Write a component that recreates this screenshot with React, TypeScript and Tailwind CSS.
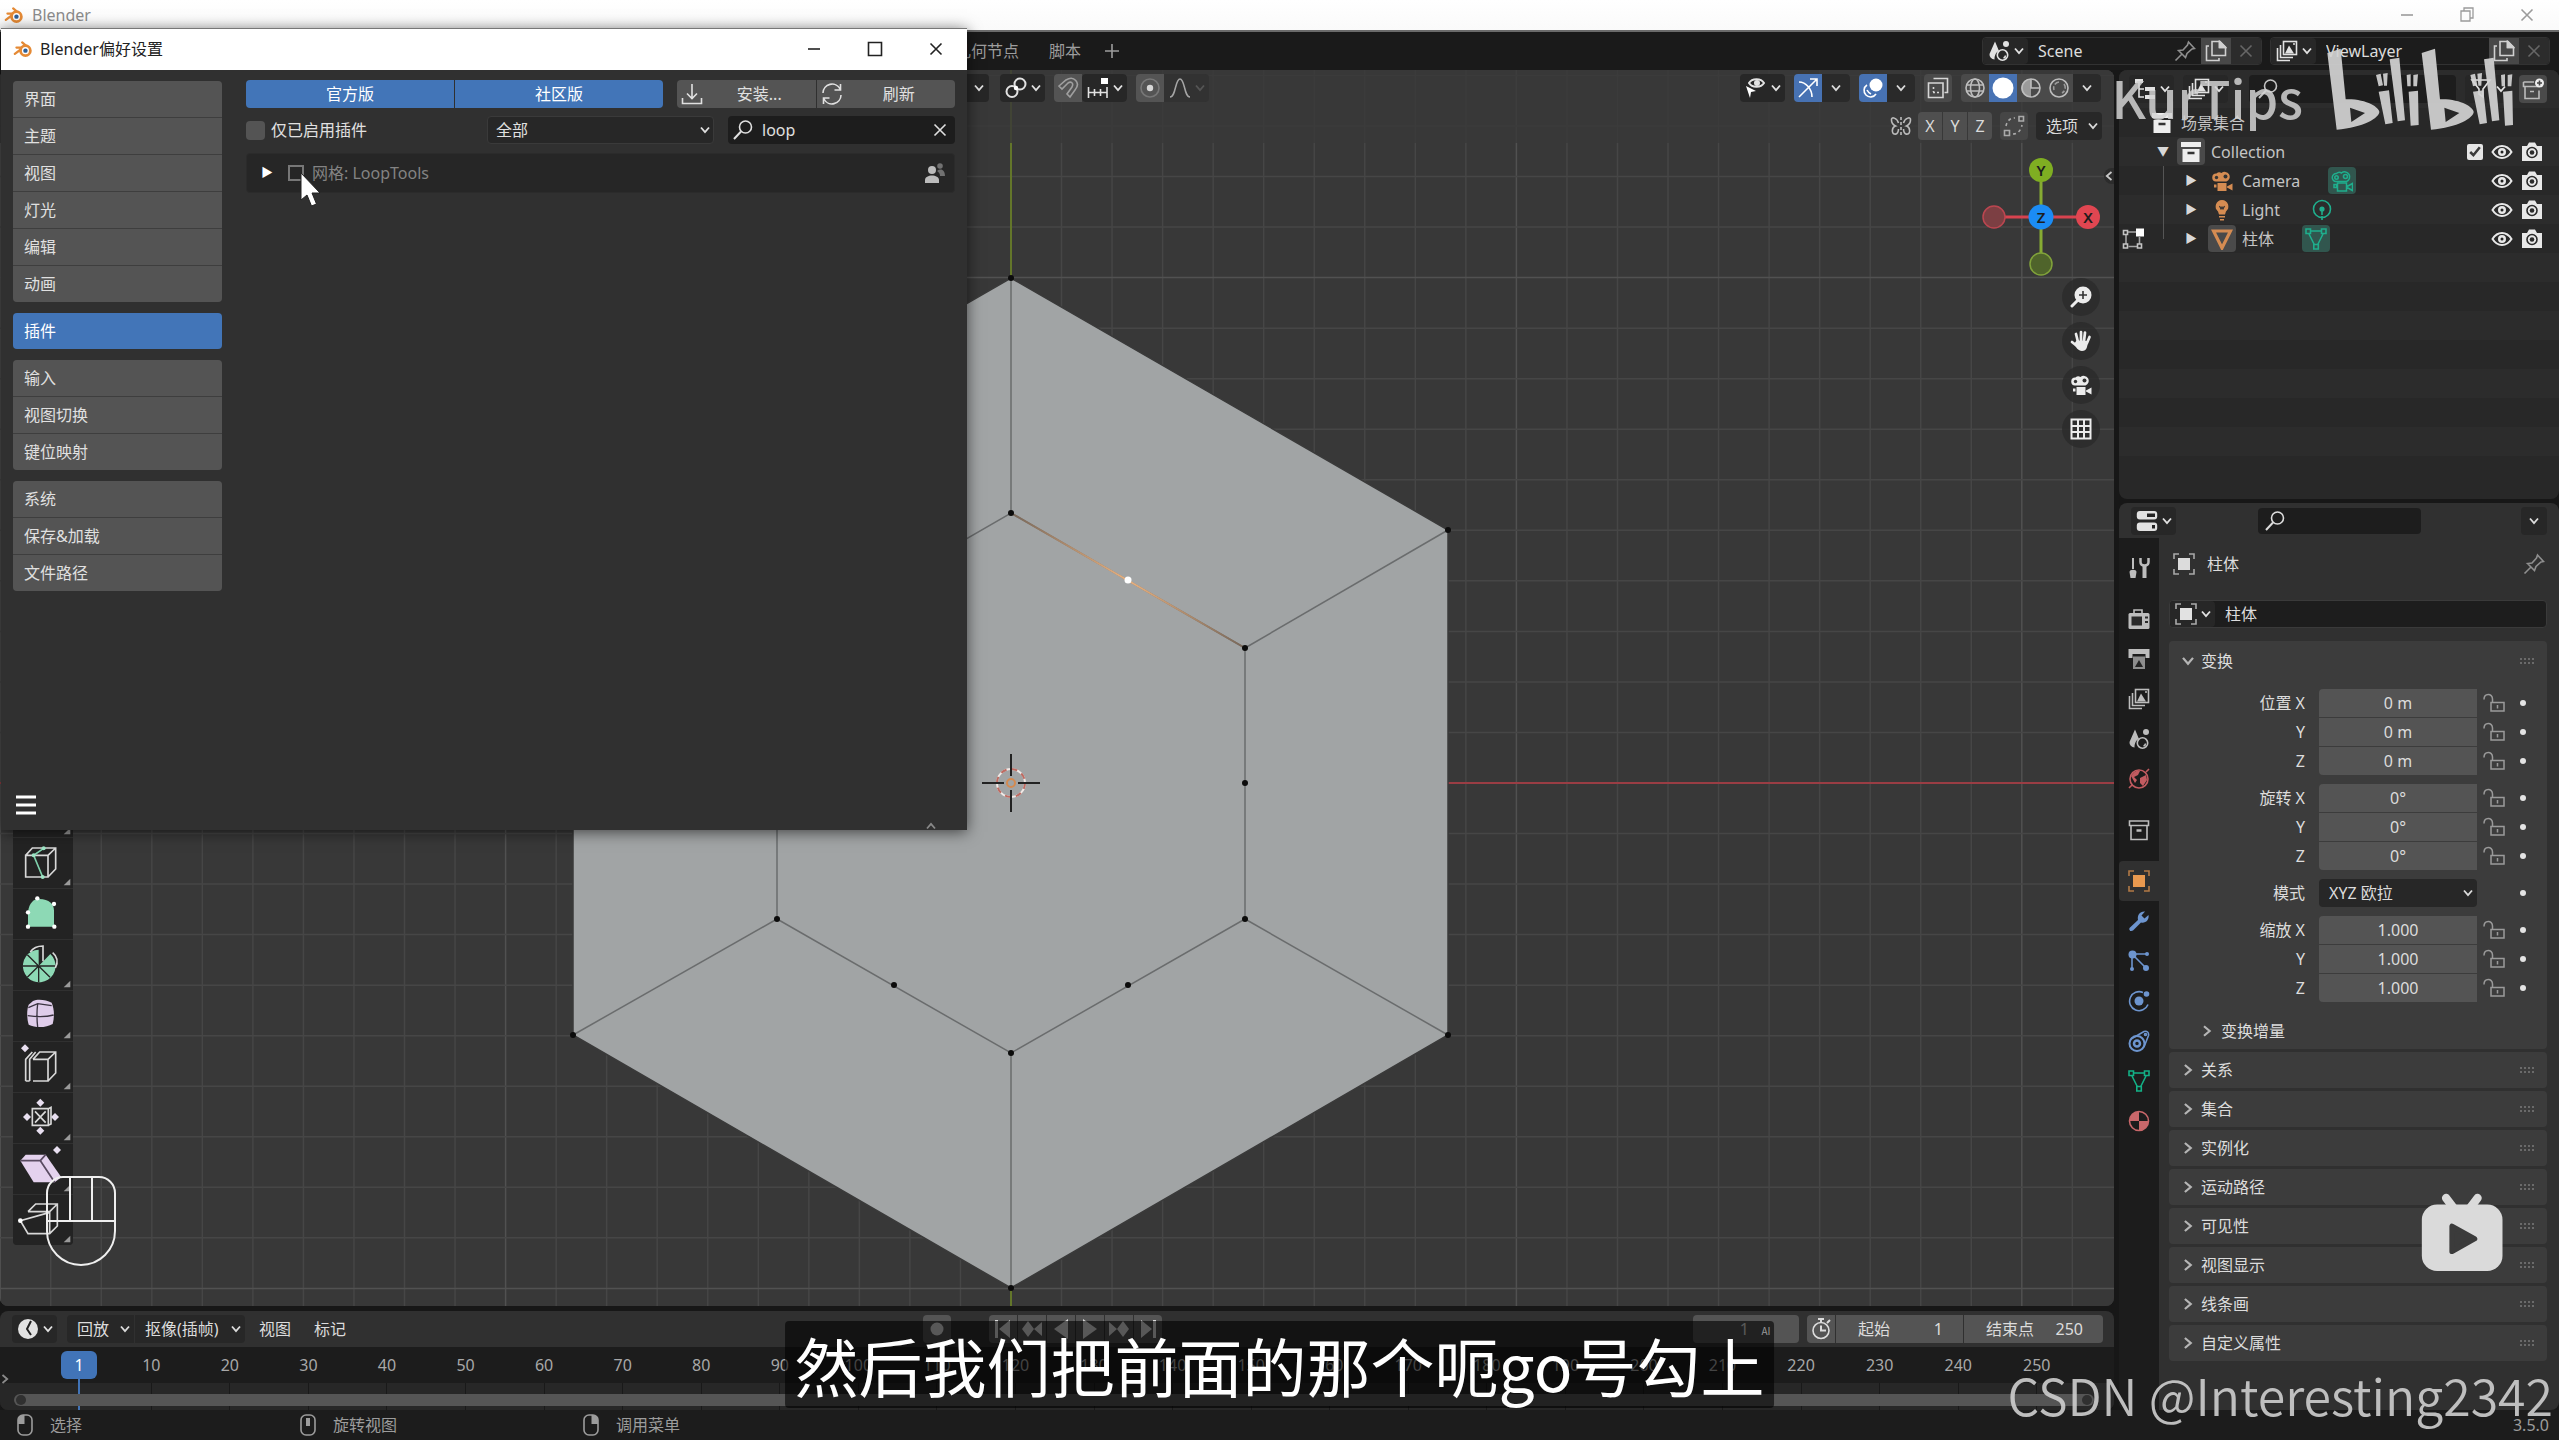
import type { ReactNode } from "react";
import { clsx } from "clsx";

const FONT = "font-['Noto_Sans','Noto_Sans_CJK_SC',sans-serif]";

/* ---------- icons ---------- */

type GlyphProps = { children: ReactNode; className?: string };

function Glyph({ children, className }: GlyphProps) {
  return (
    <svg
      viewBox="0 0 22 22"
      className={clsx("size-[22px] shrink-0", className)}
      fill="none"
      stroke="currentColor"
      strokeWidth="1.6"
      aria-hidden="true"
    >
      {children}
    </svg>
  );
}

function Chevron({ className }: { className?: string }) {
  return (
    <svg viewBox="0 0 10 8" className={clsx("h-2 w-2.5 shrink-0", className)} fill="none" stroke="currentColor" strokeWidth="1.8" aria-hidden="true">
      <path d="M1 1.5 5 6.2 9 1.5" />
    </svg>
  );
}

function BlenderLogo() {
  return (
    <svg viewBox="0 0 24 22" className="h-[18px] w-5 shrink-0" aria-hidden="true">
      <g fill="none" stroke="#e58a35" strokeLinecap="round" strokeWidth="2.8">
        <path d="M2 17 10 11M4 9.2h10M11 3l7 6" />
        <circle cx="15" cy="13" r="6" fill="#fff" strokeWidth="3.4" />
      </g>
      <circle cx="15" cy="13" r="2.7" fill="#2e5f97" />
    </svg>
  );
}

const SearchIcon = () => (
  <Glyph>
    <circle cx="13.5" cy="8" r="6" />
    <path d="M9 12.5 2 20" strokeWidth="2" />
  </Glyph>
);

const PinIcon = () => (
  <Glyph className="text-[#8f8f8f]">
    <path d="m1.5 20.5 6.5-6.5M4.5 10.5l7 7 1.500-4 5-4.500 2.500-.5-6-6.500-1 3-4.500 5z" />
  </Glyph>
);

const SceneIcon = () => (
  <Glyph>
    <path d="M7 1.500 1.500 14a5 5 0 0 0 5 5.500c0-5 2-7.500 4.500-8.500z" fill="currentColor" stroke="none" />
    <circle cx="14.500" cy="15" r="5.200" />
    <circle cx="18" cy="4" r="3" fill="currentColor" stroke="none" />
    <path d="M15.500 18c1.500-.5 2-1.500 2-2.500" />
  </Glyph>
);

const LayersIcon = () => (
  <Glyph>
    <rect x="7.500" y="1.500" width="13" height="13" />
    <path d="M9 13.500 13 5.500l5 8z" fill="currentColor" stroke="none" />
    <path d="M4.500 5v12.500H17M1.500 8v12.500H14" />
    <circle cx="18" cy="4" r="1" fill="currentColor" stroke="none" />
  </Glyph>
);

const CopyIcon = () => (
  <Glyph>
    <path d="M7 1.500h8l5.500 5.500v8.500H7zM14.500 1.500v6h6M4 6H1.500v14.500H14V18" />
    <path d="M14.500 1.500v6h6z" fill="currentColor" />
  </Glyph>
);

const CrossIcon = ({ className }: { className?: string }) => (
  <Glyph className={className}>
    <path d="m5.500 5.500 11 11m0-11-11 11" />
  </Glyph>
);

const ObjectIcon = () => (
  <Glyph>
    <path d="M1 6V1h5M16 1h5v5M21 16v5h-5M6 21H1v-5" strokeOpacity=".7" />
    <rect x="5" y="5" width="12" height="12" fill="currentColor" stroke="none" />
  </Glyph>
);

const BoxIcon = ({ filled = false }: { filled?: boolean }) => (
  <Glyph>
    {filled ? (
      <>
        <path d="M1 1h20v5H1zM2.500 8h17v13h-17z" fill="currentColor" stroke="none" />
        <path d="M7.500 12h7" stroke="#333" strokeWidth="2.500" />
      </>
    ) : (
      <>
        <path d="M1.500 2h19v4.500h-19zM3 6.500h16v14H3z" />
        <path d="M8.500 11.500h5" strokeWidth="2.500" />
      </>
    )}
  </Glyph>
);

const MovieIcon = ({ outline = false }: { outline?: boolean }) => (
  <Glyph>
    <g fill={outline ? "none" : "currentColor"} stroke={outline ? "currentColor" : "none"} strokeWidth="1.500">
      <path d="M5.500 3.500a4 4 0 0 1 5-.5 5 5 0 1 1 5 8.500H5a4 4 0 0 1 .5-8z" />
      <path d="M6.500 13h9v8h-9zM16 16.500l5.500-3v7l-5.500-3zM3 14.500h2.500v3H3z" />
    </g>
    <g fill={outline ? "none" : "#333"} stroke={outline ? "currentColor" : "none"}>
      <circle cx="5.500" cy="7.500" r="1.700" />
      <circle cx="14.500" cy="6.500" r="2" />
    </g>
  </Glyph>
);

const MeshIcon = () => (
  <Glyph>
    <path d="M5.500 3h11M4 6l5.500 11M18 6l-5.500 11" />
    <path d="M1 1h4.500v4.500H1zM16.500 1H21v4.500h-4.500zM8.800 16.500h4.500V21H8.800z" />
  </Glyph>
);

const EyeIcon = () => (
  <Glyph>
    <path d="M1.500 11c5-8 14-8 19 0-5 8-14 8-19 0z" strokeWidth="2" />
    <circle cx="11" cy="11" r="4" fill="currentColor" stroke="none" />
    <circle cx="11" cy="11" r="1.500" fill="#222" stroke="none" />
  </Glyph>
);

const CameraIcon = () => (
  <Glyph>
    <path d="M1 5h5l2-3.500h6L16 5h5v15H1z" fill="currentColor" stroke="none" />
    <circle cx="11" cy="11.500" r="5" stroke="#2a2a2a" />
    <circle cx="11" cy="11.500" r="2.300" fill="#2a2a2a" stroke="none" />
  </Glyph>
);

const EditModeIcon = () => (
  <Glyph>
    <path d="M6 4h8M4 6.500V16M17.500 9v7M6.500 18.500H15" strokeOpacity=".8" />
    <path d="M1.500 2.500h4v4h-4zM1.500 16h4v4h-4zM15.500 16h4v4h-4z" />
    <rect x="14" y="0.500" width="8" height="8" fill="#fff" stroke="none" />
  </Glyph>
);

const LockIcon = () => (
  <Glyph className="text-[#9a9a9a]">
    <path d="M8 10.500h13v8.500H8zM14.500 13v3.500M1 7.500C1 1 9.500 1 9.500 7v3" strokeWidth="1.500" />
  </Glyph>
);

const GripIcon = () => (
  <svg viewBox="0 0 15 7" className="h-[7px] w-[15px] text-[#6a6a6a]" fill="currentColor" aria-hidden="true">
    {[0, 4, 8, 12].map((x) => (
      <g key={x}>
        <rect x={x} y="0" width="2" height="2" />
        <rect x={x} y="4" width="2" height="2" />
      </g>
    ))}
  </svg>
);

/* ---------- shared controls ---------- */

type IconButtonProps = {
  label: string;
  children: ReactNode;
  className?: string;
};

function IconButton({ label, children, className }: IconButtonProps) {
  return (
    <button type="button" aria-label={label} className={clsx("flex h-7 shrink-0 items-center justify-center", className)}>
      {children}
    </button>
  );
}

function MenuIconButton({ label, children, className }: IconButtonProps) {
  return (
    <IconButton label={label} className={clsx("w-[45px] gap-1 rounded-sm bg-[#272727] text-[#e2e2e2]", className)}>
      {children}
      <Chevron />
    </IconButton>
  );
}

/* ---------- title and top bar ---------- */

function TitleBar() {
  return (
    <header className="flex h-8 shrink-0 items-center gap-2 border-b-2 border-[#6b6b6b] bg-gradient-to-b from-white to-[#fafafa] pl-1 text-[#8b8b8b]">
      <BlenderLogo />
      <h1 className="text-base leading-5">Blender</h1>
      <div className="ml-auto flex gap-[38px] pr-[21px] text-[#9b9b9b]">
        <button type="button" aria-label="最小化">
          <Glyph>
            <path d="M5 11h12" />
          </Glyph>
        </button>
        <button type="button" aria-label="还原">
          <Glyph>
            <path d="M5 7h9v10H5zM8 7V4h9v10h-3" strokeWidth="1.300" />
          </Glyph>
        </button>
        <button type="button" aria-label="关闭">
          <CrossIcon />
        </button>
      </div>
    </header>
  );
}

type DataBlockProps = { label: string; name: string; icon: ReactNode; pin?: boolean };

function DataBlock({ label, name, icon, pin }: DataBlockProps) {
  return (
    <div className="flex h-7 w-[280px] overflow-hidden rounded border border-[#323232] bg-[#1c1c1c]">
      <MenuIconButton label={`浏览${label}`} className="h-full rounded-none">
        {icon}
      </MenuIconButton>
      <input aria-label={label} defaultValue={name} className="min-w-0 flex-1 bg-transparent px-2.5 text-base text-[#dcdcdc]" />
      {pin && (
        <IconButton label="固定" className="h-full w-8">
          <PinIcon />
        </IconButton>
      )}
      <IconButton label={`新建${label}`} className="h-full w-[30px] bg-[#484848] text-[#d0d0d0]">
        <CopyIcon />
      </IconButton>
      <IconButton label={`移除${label}`} className="h-full w-[30px] bg-[#2c2c2c] text-[#666]">
        <CrossIcon />
      </IconButton>
    </div>
  );
}

function TopBar() {
  return (
    <div className="flex h-[38px] shrink-0 items-center bg-[#1a1a1a] pr-[9px] pl-[955px] text-base text-[#9d9d9d]">
      <nav className="flex items-center gap-[30px]">
        <button type="button">几何节点</button>
        <button type="button">脚本</button>
        <button type="button" aria-label="添加工作区" className="-ml-2.5">
          <Glyph>
            <path d="M11 4v14M4 11h14" />
          </Glyph>
        </button>
      </nav>
      <div className="ml-auto flex gap-2">
        <DataBlock label="场景" name="Scene" icon={<SceneIcon />} pin />
        <DataBlock label="视图层" name="ViewLayer" icon={<LayersIcon />} />
      </div>
    </div>
  );
}

/* ---------- 3D viewport ---------- */

const GRID = 50.54;
const OX = 1011;
const OY = 783;

const OUTER = [[1011, 278], [1448, 530], [1448, 1035], [1011, 1288], [573, 1035], [573, 530]];
const INNER = [[1011, 513], [1245, 648], [1245, 919], [1011, 1053], [777, 919], [777, 648]];
const MIDDLE = [[1245, 783], [1128, 985], [894, 985], [777, 783]];

function ViewportCanvas() {
  const columns = Array.from({ length: 43 }, (_, i) => i - 20);
  const rows = Array.from({ length: 25 }, (_, i) => i - 14);
  const lineColor = (i: number) => (i % 10 === 0 ? "#515151" : "#464646");

  return (
    <svg viewBox="0 70 2114 1236" preserveAspectRatio="xMidYMid slice" className="absolute inset-0 size-full" aria-hidden="true">
      <rect y="70" width="2114" height="1236" fill="#383838" />
      {columns.map((i) => (
        <line key={i} x1={OX + i * GRID} x2={OX + i * GRID} y1="70" y2="1306" stroke={lineColor(i)} strokeWidth="1.500" />
      ))}
      {rows.map((i) => (
        <line key={i} x1="0" x2="2114" y1={OY + i * GRID} y2={OY + i * GRID} stroke={lineColor(i)} strokeWidth="1.500" />
      ))}
      <line x1={OX} x2={OX} y1="70" y2="1306" stroke="#63762a" strokeWidth="2" />
      <line x1="0" x2="2114" y1={OY} y2={OY} stroke="#9a3d44" strokeWidth="2" />

      {/* mesh */}
      <polygon points={OUTER.join(" ")} fill="#a1a4a5" stroke="#3a3a3a" strokeWidth="1.500" />
      <polygon points={INNER.join(" ")} fill="none" stroke="#6a6c6d" strokeWidth="1.500" />
      {INNER.map(([x, y], i) => (
        <line key={i} x1={x} y1={y} x2={OUTER[i][0]} y2={OUTER[i][1]} stroke="#6a6c6d" strokeWidth="1.500" />
      ))}
      <defs>
        <linearGradient id="edge" x1="1011" y1="513" x2="1245" y2="648" gradientUnits="userSpaceOnUse">
          <stop offset="0" stopColor="#77675a" />
          <stop offset=".5" stopColor="#e8b180" />
          <stop offset="1" stopColor="#77675a" />
        </linearGradient>
      </defs>
      <line x1="1011" y1="513" x2="1245" y2="648" stroke="url(#edge)" strokeWidth="2" />
      {[...OUTER, ...INNER, ...MIDDLE].map(([x, y]) => (
        <circle key={`${x}-${y}`} cx={x} cy={y} r="3" fill="#0c0c0c" />
      ))}
      <circle cx="1128" cy="580" r="3.500" fill="#fff" />

      {/* 3D cursor */}
      <g fill="none" strokeWidth="2">
        <circle cx={OX} cy={OY} r="14" stroke="#f1e9e6" />
        <circle cx={OX} cy={OY} r="14" stroke="#bd6b62" strokeDasharray="6 5" />
        <path d="M1011 754v22M1011 790v22M982 783h22M1018 783h22" stroke="#222" />
        <circle cx={OX} cy={OY} r="4" stroke="#d48a50" />
      </g>
    </svg>
  );
}

function ViewportHeader() {
  const chevronBox = "w-7 rounded-r-sm bg-[#2a2a2a] text-[#dcdcdc]";
  const lit = "w-7 bg-[#545454]";
  const blue = "w-7 bg-[#4772b3] text-white";

  return (
    <div className="absolute inset-x-0 top-0 h-[73px] bg-[#383838]/80 pt-1 pr-[13px] pl-[944px]">
      <div className="flex items-center gap-[9px] text-[#d6d6d6]">
        <MenuIconButton label="坐标系">
          <span className="w-5" />
        </MenuIconButton>
        <MenuIconButton label="轴心点" className="ml-0.5">
          <Glyph>
            <circle cx="7" cy="14.500" r="5.500" strokeWidth="2" />
            <circle cx="15" cy="7" r="5.500" strokeWidth="2" />
            <circle cx="11" cy="11" r="2.200" fill="#fff" stroke="none" />
          </Glyph>
        </MenuIconButton>
        <div className="flex overflow-hidden rounded-sm">
          <IconButton label="吸附" className={lit}>
            <Glyph className="text-[#9f9f9f]">
              <path d="M2 9 9 3c8-5 15 3 9 10l-5 7-3-3 5-7c2-4-1-6-4-4L5 12z" />
            </Glyph>
          </IconButton>
          <MenuIconButton label="吸附至" className="rounded-none">
            <Glyph>
              <path d="M1.500 10v11M20 10v11M1 15.500h19M7.500 12v7M13.500 12v7" />
              <rect x="14" y="1" width="7" height="6" fill="#fff" stroke="none" />
            </Glyph>
          </MenuIconButton>
        </div>
        <div className="flex overflow-hidden rounded-sm">
          <IconButton label="衰减编辑" className={lit}>
            <Glyph>
              <circle cx="11" cy="11" r="9" stroke="#777" />
              <circle cx="11" cy="11" r="3.200" fill="currentColor" stroke="none" />
            </Glyph>
          </IconButton>
          <IconButton label="衰减类型" className="w-[45px] gap-1 bg-[#323232]">
            <Glyph className="text-[#a5a5a5]">
              <path d="M1 20c6 0 5-18 10-18s4 18 10 18" />
            </Glyph>
            <Chevron className="text-[#555]" />
          </IconButton>
        </div>

        <MenuIconButton label="物体可见性" className="ml-auto">
          <Glyph>
            <path d="M4 6c3-5 12-5 15 0-3 5-12 5-15 0z" strokeWidth="2" />
            <circle cx="12" cy="6" r="2.200" fill="currentColor" />
            <path d="m1 9 10 5-5 1-1 6z" fill="#fff" stroke="none" />
          </Glyph>
        </MenuIconButton>
        <div className="flex overflow-hidden rounded-sm">
          <IconButton label="显示 Gizmo" className={blue}>
            <Glyph>
              <path d="M2 20 20 2M13 2h7v7M2 5c7 0 13 7 13 15" />
            </Glyph>
          </IconButton>
          <IconButton label="Gizmo 选项" className={chevronBox}>
            <Chevron />
          </IconButton>
        </div>
        <div className="flex overflow-hidden rounded-sm">
          <IconButton label="显示叠加层" className={blue}>
            <Glyph>
              <circle cx="14" cy="8" r="6.500" fill="currentColor" stroke="none" />
              <path d="M5 8a6.500 6.500 0 1 0 9 9M5 13c1 2 2 3 4 4" />
            </Glyph>
          </IconButton>
          <IconButton label="叠加层选项" className={chevronBox}>
            <Chevron />
          </IconButton>
        </div>
        <IconButton label="透视模式" className="w-7 rounded-sm bg-[#4a4a4a]">
          <Glyph>
            <path d="M6.500 1.500h14v14h-3M4 6H1.500v14.500H16V6H6.500z" />
            <path d="M6 15.500h6M6.500 10v5" strokeDasharray="2 2" />
          </Glyph>
        </IconButton>
        <div className="flex overflow-hidden rounded-sm bg-[#4a4a4a] text-[#bdbdbd]">
          <IconButton label="线框" className="w-7">
            <Glyph>
              <circle cx="11" cy="11" r="9" />
              <ellipse cx="11" cy="11" rx="4.500" ry="9" />
              <path d="M2 8h18M2 14h18" />
            </Glyph>
          </IconButton>
          <IconButton label="实体" className={blue}>
            <Glyph>
              <circle cx="11" cy="11" r="10.500" fill="currentColor" stroke="none" />
            </Glyph>
          </IconButton>
          <IconButton label="材质预览" className="w-7">
            <Glyph>
              <circle cx="11" cy="11" r="9" />
              <path d="M11 11 4 17.500A9 9 0 0 1 11 2zM11 11 4 17.500a9 9 0 0 0 7 2.500z" fill="currentColor" fillOpacity=".7" stroke="none" />
              <path d="M11 2v9h9" />
            </Glyph>
          </IconButton>
          <IconButton label="渲染" className="w-7">
            <Glyph>
              <circle cx="11" cy="11" r="9" />
              <path d="M11 5a6 6 0 0 0-5 8M16 7a6 6 0 0 1-2 9" strokeOpacity=".7" strokeDasharray="5 2" />
            </Glyph>
          </IconButton>
          <IconButton label="着色选项" className="w-7 bg-[#2a2a2a] text-[#dcdcdc]">
            <Chevron />
          </IconButton>
        </div>
      </div>
    </div>
  );
}

function MeshOptions() {
  return (
    <div className="absolute top-[42px] right-3 flex items-center gap-2 text-base text-[#dadada]">
      <Glyph className="text-[#bbb]">
        <path d="M8.500 8C7 3 1 1 1.500 5c0 4 2 5 4 6-4 1-4 8-1 8 3 1 4-3 4-5M13.500 8C15 3 21 1 20.500 5c0 4-2 5-4 6 4 1 4 8 1 8-3 1-4-3-4-5" />
        <path d="M11 2v18" strokeDasharray="3 2" />
      </Glyph>
      <div className="-ml-0.5 flex gap-px overflow-hidden rounded-sm">
        {["X", "Y", "Z"].map((axis) => (
          <button key={axis} type="button" className="h-7 w-6 bg-[#4f4f4f]">
            {axis}
          </button>
        ))}
      </div>
      <IconButton label="自动合并" className="w-7 rounded-sm bg-[#464646] text-[#aaa]">
        <Glyph>
          <path d="M1.500 15.500h5v5h-5zM16 1.500h4.500V6H16z" />
          <path d="M3 11c1-5 4-8 9-8M10 19c5 0 8-4 9-9" strokeDasharray="3 3" />
        </Glyph>
      </IconButton>
      <button type="button" className="flex h-7 w-[66px] items-center justify-between rounded-sm bg-[#282828] pr-1 pl-2.5">
        选项
        <Chevron />
      </button>
    </div>
  );
}

function NavigationGizmo() {
  const navButton = "flex size-[38px] items-center justify-center rounded-full bg-[#2a2a2a]/80 text-[#ececec]";

  return (
    <>
      <svg viewBox="0 0 120 120" className="absolute top-[87px] right-[13px] size-[120px]" aria-hidden="true">
        <path d="M60 13v94" stroke="#86ab33" strokeWidth="3" />
        <path d="M13 60h94" stroke="#d8434f" strokeWidth="3" />
        <circle cx="13" cy="60" r="11" fill="#7c3f43" stroke="#bb4650" strokeWidth="1.500" />
        <circle cx="60" cy="107" r="11" fill="#4f642b" stroke="#80a23a" strokeWidth="1.500" />
        <circle cx="60" cy="13" r="12" fill="#7fae22" />
        <circle cx="107" cy="60" r="12" fill="#e04651" />
        <circle cx="60" cy="60" r="12.500" fill="#1b8cf5" />
        <g className="font-['Noto_Sans',sans-serif]" fontSize="15" fontWeight="600" textAnchor="middle" fill="#1d1d1d">
          <text x="60" y="18.500">Y</text>
          <text x="107" y="65.500">X</text>
          <text x="60" y="65.500">Z</text>
        </g>
      </svg>
      <div className="absolute top-[208px] right-3.5 flex flex-col gap-1.5">
        <button type="button" aria-label="缩放" className={navButton}>
          <Glyph className="size-6">
            <path d="m8 14-6 6" strokeWidth="3" strokeLinecap="round" />
            <circle cx="13" cy="9" r="8.500" fill="currentColor" stroke="none" />
            <path d="M13 5v8M9 9h8" stroke="#333" />
          </Glyph>
        </button>
        <button type="button" aria-label="平移" className={navButton}>
          <Glyph className="size-6">
            <path d="M8 12 6 4M11 11V2M14 11l1-8.500M17 13l2.500-6M7 16l-5-4" strokeWidth="2.700" strokeLinecap="round" />
            <path d="M6.500 10.500 18 11c-.5 5-1 10-6 10-4 0-6-4-8-7z" fill="currentColor" stroke="none" />
          </Glyph>
        </button>
        <button type="button" aria-label="相机视角" className={navButton}>
          <MovieIcon />
        </button>
        <button type="button" aria-label="切换正交" className={navButton}>
          <Glyph className="size-6">
            <path d="M1.500 1.500h19v19h-19zM8 1.500v19M14 1.500v19M1.500 8h19M1.500 14h19" strokeWidth="2" />
          </Glyph>
        </button>
      </div>
      <button type="button" aria-label="展开侧栏" className="absolute top-[98px] right-0 rounded-l-lg bg-[#2c2c2c] py-1">
        <Chevron className="rotate-90 text-[#c8c8c8]" />
      </button>
    </>
  );
}

const CUBE = "M38 52h67v65H38zM38 52l20-22h70v63l-23 24M105 52l23-22";
const Diamond = ({ x, y }: { x: number; y: number }) => (
  <path d={`M${x} ${y - 12} l12 12 -12 12 -12 -12z`} fill="#e8dff0" stroke="none" />
);

const TOOLS: { name: string; more: boolean; art: ReactNode }[] = [
  {
    name: "环切",
    more: true,
    art: <path d={CUBE} />,
  },
  {
    name: "切割",
    more: true,
    art: (
      <>
        <path d={CUBE} />
        <path d="M92 31 62 52l27 65" stroke="#7fd1ac" />
        <g fill="#9ce4c4" stroke="none">
          <circle cx="92" cy="31" r="6" />
          <circle cx="62" cy="52" r="6" />
          <circle cx="89" cy="117" r="6" />
        </g>
      </>
    ),
  },
  {
    name: "多边形建形",
    more: false,
    art: (
      <>
        <path d="M73 30c34-2 50 14 50 35v48H45V75c0-25 12-42 28-45z" fill="#8dd9b5" stroke="none" />
        <g fill="#fff" stroke="none">
          <circle cx="73" cy="28" r="6.500" />
          <circle cx="123" cy="45" r="6.500" />
          <circle cx="124" cy="113" r="6.500" />
          <circle cx="45" cy="113" r="6.500" />
          <circle cx="45" cy="70" r="6.500" />
        </g>
      </>
    ),
  },
  {
    name: "旋绕",
    more: true,
    art: (
      <>
        <path d="M77 78 112 42a49 49 0 1 1-35-13z" fill="#8dd9b5" stroke="none" />
        <path d="M77 78v48M77 78H29M77 78h49M77 78l34 34M77 78l-34 34M77 78 43 44" stroke="#242424" strokeWidth="4" />
        <path d="M52 36c8-12 22-18 38-18v46M119 38c12 10 18 26 8 46" />
      </>
    ),
  },
  {
    name: "光滑",
    more: true,
    art: (
      <>
        <path d="M60 30c15-7 40-3 56 5 8 20 9 40 3 64-20 12-52 12-72 2-6-20-6-45 0-60z" fill="#dfcdea" stroke="none" />
        <path d="M44 74c30 4 55 4 78-2M74 38c-3 25-3 45 0 70M46 50l28-12 42 6" stroke="#3a3340" strokeWidth="4" />
      </>
    ),
  },
  {
    name: "滑移边线",
    more: true,
    art: (
      <>
        <path d="M60 52h45v65H60M60 52l20-22h48v63l-23 24M105 52l23-22M38 117V52l20-22M50 117V52l18-22M38 117h12" />
        <Diamond x={36} y={19} />
      </>
    ),
  },
  {
    name: "法向缩放",
    more: true,
    art: (
      <>
        <path d="M58 47h48v50H58zM106 47l8-4v50l-8 4M66 55l32 34M98 55 66 89" />
        <Diamond x={82} y={29} />
        <Diamond x={82} y={113} />
        <Diamond x={42} y={72} />
        <Diamond x={126} y={72} />
      </>
    ),
  },
  {
    name: "切变",
    more: true,
    art: (
      <>
        <path d="M22 50 38 32h60l47 68-20 15H62z" fill="#e4d2ee" stroke="none" />
        <path d="M22 50h60l43 65M82 50l16-18" stroke="#5a4c62" />
        <Diamond x={132} y={18} />
      </>
    ),
  },
  {
    name: "断离区域",
    more: true,
    art: (
      <>
        <path d="M45 50 68 27h65v66l-23 23H45L22 77l86-24M45 50h65v66M110 50l23-23" />
        <circle cx="22" cy="77" r="7" fill="#fff" stroke="none" />
      </>
    ),
  },
];

function Toolbar() {
  return (
    <div className="absolute bottom-[61px] left-[13px] flex w-[60px] flex-col gap-px overflow-hidden rounded bg-[#303030]">
      {TOOLS.map((tool) => (
        <button key={tool.name} type="button" aria-label={tool.name} className="h-[50px] bg-[#232323]">
          <svg viewBox="0 0 180 150" className="size-full" fill="none" stroke="#d8d8d8" strokeWidth="5" aria-hidden="true">
            {tool.art}
            {tool.more && <path d="M172 122v20h-20z" fill="#9a9a9a" stroke="none" />}
          </svg>
        </button>
      ))}
    </div>
  );
}

function Viewport() {
  return (
    <main className="relative min-h-0 flex-1 overflow-hidden rounded-lg bg-[#383838]">
      <ViewportCanvas />
      <ViewportHeader />
      <MeshOptions />
      <NavigationGizmo />
      <Toolbar />
      {/* pressed-mouse indicator */}
      <svg viewBox="0 0 70 90" className="absolute bottom-10 left-[46px] h-[90px] w-[70px]" fill="none" stroke="#efefef" strokeWidth="2" aria-hidden="true">
        <path d="M17 1h36a16 16 0 0 1 16 16v38a34 34 0 0 1-68 0V17A16 16 0 0 1 17 1zM1 45h68M24 1v44M46 1v44" />
      </svg>
    </main>
  );
}

/* ---------- timeline ---------- */

const FRAMES = Array.from({ length: 25 }, (_, i) => (i + 1) * 10);

const PLAYBACK = [
  { label: "跳至起始", d: "M3 2h3v18H3zM18 2v18L7 11z" },
  { label: "上一关键帧", d: "M7 3l6 8-6 8-6-8zM21 4v14l-8-7z" },
  { label: "倒放", d: "M18 1v20L4 11z" },
  { label: "播放", d: "M4 1v20l14-10z" },
  { label: "下一关键帧", d: "M1 4v14l8-7zM15 3l6 8-6 8-6-8z" },
  { label: "跳至结束", d: "M4 2v18l11-9zM16 2h3v18h-3z" },
];

function Timeline() {
  return (
    <section className="flex h-[99px] shrink-0 flex-col overflow-hidden rounded-lg bg-[#303030] text-base text-[#dcdcdc]">
      <div className="relative flex h-9 items-center pr-[11px] pl-3">
        <MenuIconButton label="编辑器类型">
          <Glyph>
            <circle cx="11" cy="11" r="10" fill="currentColor" stroke="none" />
            <path d="m14 3-4 8 4 6" stroke="#222" strokeWidth="2" />
          </Glyph>
        </MenuIconButton>
        <div className="ml-2.5 flex gap-px">
          <button type="button" className="flex h-7 w-[67px] items-center justify-between rounded-l-sm bg-[#272727] pr-1 pl-2.5">
            回放
            <Chevron />
          </button>
          <button type="button" className="flex h-7 w-[110px] items-center justify-between rounded-r-sm bg-[#272727] pr-1 pl-2.5">
            抠像(插帧)
            <Chevron />
          </button>
        </div>
        <button type="button" className="ml-3.5">视图</button>
        <button type="button" className="ml-[23px]">标记</button>

        <div className="ml-auto flex h-7 gap-2">
          <input aria-label="当前帧" defaultValue="1" className="w-[106px] rounded bg-[#545454] pr-[50px] text-right" />
          <div className="flex gap-px overflow-hidden rounded">
            <IconButton label="预览范围" className="w-7 bg-[#545454]">
              <Glyph>
                <circle cx="11" cy="12.500" r="8" />
                <path d="M11 4V1M8 1h6M11 7.500v5h5M17 5l3-3" strokeWidth="2" />
              </Glyph>
            </IconButton>
            <label className="flex w-[127px] items-center bg-[#545454] pr-5 pl-[22px]">
              <span className="shrink-0">起始</span>
              <input defaultValue="1" className="w-0 min-w-0 flex-1 bg-transparent text-right" />
            </label>
            <label className="flex w-[139px] items-center bg-[#545454] pr-5 pl-[22px]">
              <span className="shrink-0">结束点</span>
              <input defaultValue="250" className="w-0 min-w-0 flex-1 bg-transparent text-right" />
            </label>
          </div>
        </div>

        {/* playback controls float over the header */}
        <div className="absolute top-1 left-[923px] flex gap-[38px]">
          <IconButton label="自动插帧" className="w-7 rounded-sm bg-[#545454]">
            <Glyph>
              <circle cx="11" cy="11" r="6.500" fill="currentColor" stroke="none" />
            </Glyph>
          </IconButton>
          <div className="flex gap-px overflow-hidden rounded">
            {PLAYBACK.map((item) => (
              <IconButton key={item.label} label={item.label} className="w-7 bg-[#545454]">
                <Glyph className="size-5">
                  <path d={item.d} fill="currentColor" stroke="none" />
                </Glyph>
              </IconButton>
            ))}
          </div>
        </div>
      </div>

      <div className="relative flex-1 bg-[#1c1c1c]">
        <div className="flex h-[36px] items-center pr-[38px] pl-28 text-[#a8a8a8]">
          {FRAMES.map((frame) => (
            <span key={frame} className="flex-1 text-center">
              {frame}
            </span>
          ))}
        </div>
        <div className="flex h-[27px] bg-[#272727] pr-[38px] pl-28">
          {FRAMES.map((frame) => (
            <span key={frame} className="flex flex-1 justify-center">
              <span className="w-px bg-[#191919]" />
            </span>
          ))}
        </div>
        {/* current frame */}
        <div className="absolute top-1 left-[61px] flex h-full w-9 flex-col items-center">
          <span className="flex h-7 w-9 items-center justify-center rounded-md bg-[#4174b8] text-white">1</span>
          <span className="w-0.5 flex-1 bg-[#4174b8]" />
        </div>
        <div className="absolute right-5 bottom-1 left-3.5 flex h-3 items-center justify-between rounded-full bg-[#555] px-0.5">
          <span className="size-2.5 rounded-full bg-[#303030]" />
          <span className="size-2.5 rounded-full bg-[#303030]" />
        </div>
        <Chevron className="absolute top-7 left-0 -rotate-90 text-[#8a8a8a]" />
      </div>
    </section>
  );
}

/* ---------- outliner ---------- */

type TreeRow = { name: string; icon: ReactNode; color: string; data?: ReactNode; active?: boolean; dataBox?: boolean };

const OBJECTS: TreeRow[] = [
  { name: "Camera", icon: <MovieIcon />, color: "text-[#d58c52]", data: <MovieIcon outline />, dataBox: true },
  {
    name: "Light",
    icon: (
      <Glyph>
        <path d="M11 1a6.500 6.500 0 0 0-4 11.500L8 15.500h6l1-3A6.500 6.500 0 0 0 11 1zM8 17h6v1.500H8zM9 20h4v1.500H9z" fill="currentColor" stroke="none" />
        <path d="m8.500 7 1.500 3 1-2 1 2 1.500-3" stroke="#333" strokeWidth="1.200" />
      </Glyph>
    ),
    color: "text-[#d58c52]",
    data: (
      <Glyph>
        <circle cx="11" cy="10" r="8.500" />
        <circle cx="11" cy="10" r="1.800" fill="currentColor" />
        <path d="M11 12v9" strokeDasharray="4 1" />
      </Glyph>
    ),
  },
  {
    name: "柱体",
    icon: (
      <Glyph>
        <path d="M2.500 3h17L11 20z" strokeWidth="3.200" />
      </Glyph>
    ),
    color: "text-[#d58c52]",
    data: <MeshIcon />,
    active: true,
    dataBox: true,
  },
];

function RowToggles({ name }: { name: string }) {
  return (
    <div className="ml-auto flex gap-2 pr-4 text-[#e8e8e8]">
      <button type="button" aria-label={`在视图中隐藏 ${name}`}>
        <EyeIcon />
      </button>
      <button type="button" aria-label={`在渲染中禁用 ${name}`}>
        <CameraIcon />
      </button>
    </div>
  );
}

function Outliner() {
  return (
    <section className="h-[429px] shrink-0 overflow-hidden rounded-lg bg-[#282828] text-base text-[#c4c4c4]">
      <div className="flex h-[38px] items-center gap-[9px] bg-[#2c2c2c] pr-3 pl-2.5">
        <MenuIconButton label="编辑器类型">
          <Glyph>
            <path d="M1 1h8v4H1zM11 9h10v4H11zM11 17h10v4H11z" fill="currentColor" stroke="none" />
            <path d="M5 5v14h5M5 11h5" />
          </Glyph>
        </MenuIconButton>
        <MenuIconButton label="显示模式">
          <LayersIcon />
        </MenuIconButton>
        <label className="ml-3 flex h-7 min-w-0 flex-1 items-center rounded bg-[#1d1d1d] px-2">
          <SearchIcon />
          <input aria-label="搜索大纲" className="min-w-0 flex-1 bg-transparent" />
        </label>
        <MenuIconButton label="过滤">
          <Glyph>
            <path d="M2 2h18l-7 9v8l-4-3v-5z" />
          </Glyph>
        </MenuIconButton>
        <IconButton label="新建集合" className="w-7 rounded-sm bg-[#4a4a4a]">
          <Glyph className="text-[#bbb]">
            <path d="M1.500 4H12M1.500 4v4.500h15M3 8.500v12h14v-8M8 13.500h4" />
            <circle cx="17.500" cy="5" r="4.500" fill="#eee" stroke="none" />
            <path d="M17.500 2.500v5M15 5h5" stroke="#444" />
          </Glyph>
        </IconButton>
      </div>
      <ul>
        <li className="flex h-[29px] items-center gap-2 pl-8">
          <span className="text-[#eee]">
            <BoxIcon filled />
          </span>
          场景集合
        </li>
        <li className="flex h-[29px] items-center gap-1.5 bg-[#2c2c2c] pl-9">
          <span className="w-4 text-center text-xs leading-4 text-[#d8d8d8]">▼</span>
          <span className="flex h-[27px] w-7 items-center justify-center rounded bg-[#4a4a4a] text-[#eee]">
            <BoxIcon filled />
          </span>
          Collection
          <input type="checkbox" defaultChecked aria-label="排除 Collection" className="ml-auto size-4 accent-[#e6e6e6]" />
          <div className="ml-0.5">
            <RowToggles name="Collection" />
          </div>
        </li>
        {OBJECTS.map((row, i) => (
          <li key={row.name} className={clsx("flex h-[29px] items-center", i % 2 === 1 && "bg-[#2c2c2c]")}>
            <span className="flex w-11 justify-start pl-[3px]">{row.active && <EditModeIcon />}</span>
            <span className={clsx("w-px bg-[#555]", row.active ? "h-1/2 self-start" : "h-full")} />
            <span className="w-11 pl-[21px] text-xs leading-4 text-[#d8d8d8]">▶</span>
            <span className={clsx("flex h-[27px] w-7 items-center justify-center rounded", row.color, row.active && "bg-[#4a4a4a]")}>{row.icon}</span>
            <span className="ml-1.5">{row.name}</span>
            <span className={clsx("ml-7 flex h-[27px] w-7 items-center justify-center rounded text-[#1fae8d]", row.dataBox && "bg-[#31564e]")}>
              {row.data}
            </span>
            <RowToggles name={row.name} />
          </li>
        ))}
        <li className="h-[29px] bg-[#2c2c2c]" />
        <li className="h-[29px]" />
        <li className="h-[29px] bg-[#2c2c2c]" />
        <li className="h-[29px]" />
        <li className="h-[29px] bg-[#2c2c2c]" />
        <li className="h-[29px]" />
        <li className="h-[29px] bg-[#2c2c2c]" />
      </ul>
    </section>
  );
}

/* ---------- properties ---------- */

type Tab = { label: string; color: string; icon: ReactNode; active?: boolean };

const GRAY = "text-[#bdbdbd]";
const BLUE = "text-[#6d95cf]";

const TAB_GROUPS: Tab[][] = [
  [
    {
      label: "工具",
      color: GRAY,
      icon: (
        <Glyph>
          <path d="M5 1v11" strokeWidth="2" />
          <path d="M1.500 15c0-3 7-3 7 0l-1 6h-5z" fill="currentColor" stroke="none" />
          <path d="M12.500 1v4c0 2.500 2 3.500 4 3.500s4-1 4-3.500V1" strokeWidth="2.500" />
          <path d="M16.500 8v13" strokeWidth="4" />
        </Glyph>
      ),
    },
  ],
  [
    {
      label: "渲染",
      color: GRAY,
      icon: (
        <Glyph>
          <path d="M6 5V2h8v3" />
          <rect x="0.500" y="5" width="21" height="16" rx="1.500" fill="currentColor" stroke="none" />
          <path d="M3.500 8.500H14v9H3.500z" fill="#2a2a2a" stroke="none" />
          <path d="M17 9.500h3M17 14h3" stroke="#2a2a2a" strokeWidth="2" />
        </Glyph>
      ),
    },
    {
      label: "输出",
      color: GRAY,
      icon: (
        <Glyph>
          <path d="M0.500 1h21v9h-4V6h-13v4h-4z" fill="currentColor" stroke="none" />
          <path d="M5 8.500h12V21H5z" fill="currentColor" fillOpacity=".7" stroke="none" />
          <path d="m7 19 4-7 4 7z" fill="#222" stroke="none" />
        </Glyph>
      ),
    },
    { label: "视图层", color: GRAY, icon: <LayersIcon /> },
    { label: "场景", color: GRAY, icon: <SceneIcon /> },
    {
      label: "世界环境",
      color: "text-[#c25b60]",
      icon: (
        <Glyph>
          <circle cx="11" cy="11" r="9" />
          <path d="M3 8c3-5 6-6 9-5l-2 4-4 2 3 3-2 3zM12 10l6-3 1 5-4 6-3-3z" fill="currentColor" stroke="none" />
          <path d="m1 20 3-3M18 4l3-3" />
        </Glyph>
      ),
    },
  ],
  [{ label: "集合", color: GRAY, icon: <BoxIcon /> }],
  [
    { label: "物体", color: "text-[#e9994f]", icon: <ObjectIcon />, active: true },
    {
      label: "修改器",
      color: BLUE,
      icon: (
        <Glyph>
          <path d="M2 17.500 10 10C9 5 12 1 17 1.500l-3.500 4 3 3L20.500 5c1 5-3 8.500-7.500 7.500L5 20.500C2.500 22 0 19.500 2 17.500z" fill="currentColor" stroke="none" />
        </Glyph>
      ),
    },
    {
      label: "粒子",
      color: BLUE,
      icon: (
        <Glyph>
          <path d="M4 4h15M4 4v15M4 4l14 14" />
          <g fill="currentColor" stroke="none">
            <circle cx="4.500" cy="4.500" r="4" />
            <circle cx="19" cy="4" r="2" />
            <circle cx="4" cy="19" r="2" />
            <circle cx="18" cy="18" r="3" />
          </g>
        </Glyph>
      ),
    },
    {
      label: "物理",
      color: BLUE,
      icon: (
        <Glyph>
          <path d="M15 2.500a9.500 9.500 0 1 0 5 12" />
          <circle cx="11" cy="11" r="4.500" fill="currentColor" stroke="none" />
          <circle cx="18.500" cy="4" r="2.800" fill="currentColor" stroke="none" />
        </Glyph>
      ),
    },
    {
      label: "物体约束",
      color: BLUE,
      icon: (
        <Glyph>
          <path d="M3 9 16 1.500c3-1 5 1 4.500 4L16 17" />
          <circle cx="9" cy="13.500" r="7.500" strokeWidth="2" />
          <circle cx="9" cy="13.500" r="3" strokeWidth="2.500" />
          <circle cx="17.500" cy="4.500" r="1" />
        </Glyph>
      ),
    },
    { label: "物体数据", color: "text-[#13b186]", icon: <MeshIcon /> },
    {
      label: "材质",
      color: "text-[#c9676a]",
      icon: (
        <Glyph>
          <circle cx="11" cy="11" r="9.500" />
          <path d="M11 1.500V11H1.500A9.500 9.500 0 0 1 11 1.500zM11 20.500V11h9.500a9.500 9.500 0 0 1-9.500 9.500z" fill="currentColor" stroke="none" />
        </Glyph>
      ),
    },
  ],
];

const VECTORS = {
  location: { label: "位置", values: ["0 m", "0 m", "0 m"] },
  rotation: { label: "旋转", values: ["0°", "0°", "0°"] },
  scale: { label: "缩放", values: ["1.000", "1.000", "1.000"] },
};

function VectorField({ id }: { id: keyof typeof VECTORS }) {
  const { label, values } = VECTORS[id];
  return (
    <div className="flex flex-col gap-px">
      {values.map((value, i) => {
        const axis = "XYZ"[i];
        const inputId = `${id}-${axis}`;
        return (
          <div key={axis} className="flex h-7 items-center">
            <label htmlFor={inputId} className="flex-1 pr-3.5 text-right">
              {i === 0 ? `${label} ${axis}` : axis}
            </label>
            <input
              id={inputId}
              defaultValue={value}
              className={clsx("h-full w-[158px] bg-[#545454] text-center", i === 0 && "rounded-tl", i === 2 && "rounded-bl")}
            />
            <button type="button" aria-label={`锁定${label} ${axis}`} className="ml-1.5">
              <LockIcon />
            </button>
            <span className="mr-[21px] ml-[15px] size-1.5 rounded-full bg-[#e4e4e4]" />
          </div>
        );
      })}
    </div>
  );
}

const PANELS = ["关系", "集合", "实例化", "运动路径", "可见性", "视图显示", "线条画", "自定义属性"];

function Properties() {
  return (
    <section className="flex min-h-0 flex-1 flex-col overflow-hidden rounded-lg bg-[#303030] text-base text-[#dcdcdc]">
      <div className="flex h-[35px] shrink-0 items-center pr-3 pl-3">
        <MenuIconButton label="编辑器类型">
          <Glyph>
            <rect x="0.800" y="1" width="20.400" height="8.500" rx="3" fill="currentColor" stroke="none" />
            <rect x="0.800" y="12.500" width="20.400" height="8.500" rx="3" fill="currentColor" stroke="none" />
            <path d="M11 3.500h8v3.500h-8zM16 15h3v3.500h-3z" fill="#222" stroke="none" />
          </Glyph>
        </MenuIconButton>
        <label className="ml-[82px] flex h-[26px] w-[163px] items-center rounded bg-[#1d1d1d] px-1.5">
          <SearchIcon />
          <input aria-label="搜索属性" className="min-w-0 flex-1 bg-transparent" />
        </label>
        <IconButton label="选项" className="ml-auto w-[26px] rounded bg-[#272727]">
          <Chevron />
        </IconButton>
      </div>
      <div className="flex min-h-0 flex-1">
        <nav className="flex w-10 flex-col gap-[11px] bg-[#1c1c1c] pt-2.5">
          {TAB_GROUPS.map((group) => (
            <div key={group[0].label}>
              {group.map((tab) => (
                <button
                  key={tab.label}
                  type="button"
                  aria-label={tab.label}
                  className={clsx("flex h-10 w-full items-center justify-center", tab.color, tab.active && "rounded-l bg-[#303030]")}
                >
                  {tab.icon}
                </button>
              ))}
            </div>
          ))}
        </nav>
        <div className="min-w-0 flex-1 pr-3 pl-2.5">
          <div className="flex h-[52px] items-center gap-3 pr-0.5 pl-1">
            <ObjectIcon />
            <span className="flex-1">柱体</span>
            <PinIcon />
          </div>
          <div className="mt-2.5 flex h-7 overflow-hidden rounded border border-[#3a3a3a] bg-[#1d1d1d]">
            <MenuIconButton label="浏览物体" className="h-full rounded-none">
              <ObjectIcon />
            </MenuIconButton>
            <input aria-label="物体名称" defaultValue="柱体" className="min-w-0 flex-1 bg-transparent px-2.5" />
          </div>

          <div className="mt-[13px] flex flex-col gap-[3px]">
            <div className="rounded bg-[#3c3c3c]">
              <div className="flex h-10 items-center gap-1.5 pr-3 pl-3">
                <Chevron className="h-2.5 w-3.5 text-[#b5b5b5]" />
                <span className="flex-1">变换</span>
                <GripIcon />
              </div>
              <div className="flex flex-col gap-[9px] pt-2">
                <VectorField id="location" />
                <VectorField id="rotation" />
                <div className="flex h-7 items-center">
                  <label htmlFor="mode" className="flex-1 pr-3.5 text-right">
                    模式
                  </label>
                  <div className="relative h-full w-[158px]">
                    <select id="mode" className="size-full appearance-none rounded bg-[#272727] pl-2.5">
                      <option>XYZ 欧拉</option>
                    </select>
                    <Chevron className="absolute top-2.5 right-1" />
                  </div>
                  <span className="mr-[21px] ml-[43px] size-1.5 rounded-full bg-[#e4e4e4]" />
                </div>
                <VectorField id="scale" />
              </div>
              <button type="button" className="mt-[11px] flex h-9 items-center gap-2 pl-8">
                <Chevron className="h-2.5 w-3 -rotate-90 text-[#b5b5b5]" />
                变换增量
              </button>
            </div>
            {PANELS.map((panel) => (
              <button key={panel} type="button" className="flex h-9 items-center gap-1.5 rounded bg-[#3c3c3c] px-3 text-left">
                <Chevron className="h-2.5 w-3.5 -rotate-90 text-[#b5b5b5]" />
                <span className="flex-1">{panel}</span>
                <GripIcon />
              </button>
            ))}
          </div>
        </div>
      </div>
    </section>
  );
}

/* ---------- preferences window ---------- */

const CATEGORIES = [
  ["界面", "主题", "视图", "灯光", "编辑", "动画"],
  ["插件"],
  ["输入", "视图切换", "键位映射"],
  ["系统", "保存&加载", "文件路径"],
];

function PreferencesWindow() {
  return (
    <div
      role="dialog"
      aria-label="Blender偏好设置"
      className="absolute top-7 left-px flex h-[802px] w-[966px] flex-col border-t border-[#777] bg-[#303030] text-base text-[#e0e0e0] shadow-[0_2px_14px_rgba(0,0,0,0.6)]"
    >
      <div className="flex h-[41px] shrink-0 items-center gap-[7px] bg-white pr-5 pb-0.5 pl-3 text-[#222]">
        <BlenderLogo />
        <h2 className="leading-5">Blender偏好设置</h2>
        <div className="ml-auto flex gap-[39px]">
          <button type="button" aria-label="最小化">
            <Glyph>
              <path d="M5 11h12" />
            </Glyph>
          </button>
          <button type="button" aria-label="最大化">
            <Glyph>
              <path d="M4.500 4.500h13v13h-13z" />
            </Glyph>
          </button>
          <button type="button" aria-label="关闭">
            <CrossIcon />
          </button>
        </div>
      </div>
      <div className="flex min-h-0 flex-1 gap-6 pt-2.5 pr-3 pl-3">
        <nav className="flex w-[209px] flex-col gap-[11px] pt-px">
          {CATEGORIES.map((group) => (
            <div key={group[0]} className="flex flex-col gap-px overflow-hidden rounded bg-[#3e3e3e]">
              {group.map((item) => (
                <button key={item} type="button" className={clsx("h-9 pl-[11px] text-left", item === "插件" ? "bg-[#4275b8] text-white" : "bg-[#545454]")}>
                  {item}
                </button>
              ))}
            </div>
          ))}
          <button type="button" aria-label="菜单" className="mt-auto mb-3.5 ml-0.5 w-6 text-white">
            <Glyph className="size-6">
              <path d="M1 3h20M1 11h20M1 19h20" strokeWidth="3" />
            </Glyph>
          </button>
        </nav>
        <div className="min-w-0 flex-1">
          <div className="flex h-7 gap-3.5">
            <div className="flex flex-[3] gap-px overflow-hidden rounded">
              <button type="button" className="flex-1 bg-[#4275b8] text-white">官方版</button>
              <button type="button" className="flex-1 bg-[#4275b8] text-white">社区版</button>
            </div>
            <div className="flex flex-[2] gap-px overflow-hidden rounded">
              <button type="button" className="flex flex-1 items-center bg-[#545454] pl-1">
                <Glyph>
                  <path d="M11 1v14M6 10.500l5 5 5-5M1.500 15v5.500h19V15" />
                </Glyph>
                <span className="flex-1">安装...</span>
              </button>
              <button type="button" className="flex flex-1 items-center bg-[#545454] pl-1">
                <Glyph>
                  <path d="M2 10a9 9 0 0 1 17-4M19.500 1v6h-6M20 12a9 9 0 0 1-17 4M2.500 21v-6h6" />
                </Glyph>
                <span className="flex-1">刷新</span>
              </button>
            </div>
          </div>
          <div className="mt-2 grid h-7 grid-cols-3 items-center gap-3.5">
            <label className="flex items-center gap-1.5">
              <input type="checkbox" className="size-[19px] appearance-none rounded-sm bg-[#545454]" />
              仅已启用插件
            </label>
            <div className="relative h-full">
              <select aria-label="类别" className="size-full appearance-none rounded border border-[#3a3a3a] bg-[#272727] pl-2">
                <option>全部</option>
              </select>
              <Chevron className="absolute top-2.5 right-1" />
            </div>
            <label className="flex h-full min-w-0 items-center gap-2 rounded bg-[#1d1d1d] pr-1 pl-1">
              <SearchIcon />
              <input aria-label="搜索插件" defaultValue="loop" className="min-w-0 flex-1 bg-transparent" />
              <CrossIcon />
            </label>
          </div>
          <div className="mt-[9px] flex h-10 items-center rounded border border-[#2b2b2b] bg-[#262626] pr-2 pl-3.5 text-[#838383]">
            <button type="button" aria-label="展开 LoopTools" className="text-xs leading-4 text-white">
              ▶
            </button>
            <label className="ml-[15px] flex flex-1 items-center gap-2">
              <input type="checkbox" className="size-4 appearance-none border-2 border-[#777]" />
              网格: LoopTools
            </label>
            <Glyph className="text-[#bcbcbc]">
              <g fill="currentColor" stroke="none">
                <circle cx="8" cy="8" r="4" />
                <path d="M1 21v-3c0-6 14-6 14 0v3z" />
                <circle cx="16" cy="4" r="2.800" opacity=".5" />
                <path d="M13 9c4-3 8-1 8 5h-5c0-2-1-4-3-5z" opacity=".5" />
              </g>
            </Glyph>
          </div>
        </div>
      </div>
      <svg viewBox="0 0 24 36" className="absolute top-[143px] left-[298px] h-9 w-6" aria-hidden="true">
        <path d="M2 1v27l6-5 4.500 11 5-2-4.500-11h8z" fill="#fff" stroke="#222" />
      </svg>
      <Chevron className="absolute right-7 bottom-0 w-4 rotate-180 text-[#888]" />
    </div>
  );
}

/* ---------- status bar and watermarks ---------- */

const HINTS = [
  { text: "选择", button: "M10.500 1v9H4V6.500C4 3 6 1 10.500 1z" },
  { text: "旋转视图", button: "M9 4h4v8H9z" },
  { text: "调用菜单", button: "M11.500 1v9H18V6.500C18 3 16 1 11.500 1z" },
];

function StatusBar() {
  return (
    <footer className="flex h-[30px] shrink-0 items-center bg-[#1c1c1c] pr-2.5 pl-3.5 text-base text-[#9c9c9c]">
      {HINTS.map((hint) => (
        <div key={hint.text} className="flex w-[283px] items-center gap-3.5">
          <Glyph>
            <rect x="4" y="1" width="14" height="20" rx="5" />
            <path d={hint.button} fill="currentColor" stroke="none" />
          </Glyph>
          {hint.text}
        </div>
      ))}
      <span className="ml-auto">3.5.0</span>
    </footer>
  );
}

function BilibiliLogo() {
  const half = (
    <>
      <path
        fillRule="evenodd"
        d="M712 68 752 55 767 207C830 205 868 232 868 245 868 262 820 292 740 298zM780 232 784 275 825 248z"
      />
      <path d="M858 134 872 130 879 165 866 168zM879 130 893 128 891 166 882 166zM866 184 897 180 908 278 886 282z" />
      <path d="M899 87 928 82 945 270 923 273z" />
      <path d="M950 134 962 132 962 168 952 168zM970 134 984 132 981 168 970 168zM956 184 984 181 986 284 962 286z" />
    </>
  );
  return (
    <svg viewBox="705 50 570 252" className="h-[84px] w-[190px]" fill="#d2d2d2" fillOpacity=".92" role="img" aria-label="bilibili">
      {half}
      <g transform="translate(283 0)">{half}</g>
    </svg>
  );
}

function Overlays() {
  return (
    <div className="pointer-events-none absolute inset-0 font-['Noto_Sans_CJK_SC',sans-serif]">
      <div className="absolute top-[47px] right-[44px] flex items-center gap-[22px]">
        <span className="pt-4 text-[52px] leading-[68px] font-medium text-[#d2d2d2]/85">KurTips</span>
        <BilibiliLogo />
      </div>
      <svg viewBox="960 788 252 238" className="absolute right-[55px] bottom-[168px] h-[79px] w-[84px]" role="img" aria-label="播放器">
        <path d="m1038 803 24 32M1133 803l-24 32" stroke="#dadada" strokeWidth="25" strokeLinecap="round" />
        <rect x="965" y="823" width="243" height="200" rx="46" fill="#dadada" />
        <path d="M1056 888v76l68-38z" fill="#3b3b3b" stroke="#3b3b3b" strokeWidth="16" strokeLinejoin="round" />
      </svg>
      <div className="absolute bottom-8 left-1/2 -translate-x-1/2 rounded bg-black/60 px-2.5 whitespace-nowrap text-white">
        <p className="text-[64px] leading-[87px]">然后我们把前面的那个呃go号勾上</p>
        <span className="absolute top-1 right-1 text-[10px] leading-3 text-[#999]">AI</span>
      </div>
      <p className="absolute right-1.5 bottom-4 text-[50px] leading-[60px] font-[350] text-[#cfcfcf]/90">CSDN @Interesting2342</p>
    </div>
  );
}

export default function App() {
  return (
    <div className={clsx("relative flex h-screen flex-col overflow-hidden bg-[#171717]", FONT)}>
      <TitleBar />
      <TopBar />
      <div className="flex min-h-0 flex-1 gap-[5px]">
        <div className="flex min-w-0 flex-1 flex-col gap-[5px]">
          <Viewport />
          <Timeline />
        </div>
        <aside className="flex w-[440px] shrink-0 flex-col gap-1">
          <Outliner />
          <Properties />
        </aside>
      </div>
      <StatusBar />
      <PreferencesWindow />
      <Overlays />
    </div>
  );
}
